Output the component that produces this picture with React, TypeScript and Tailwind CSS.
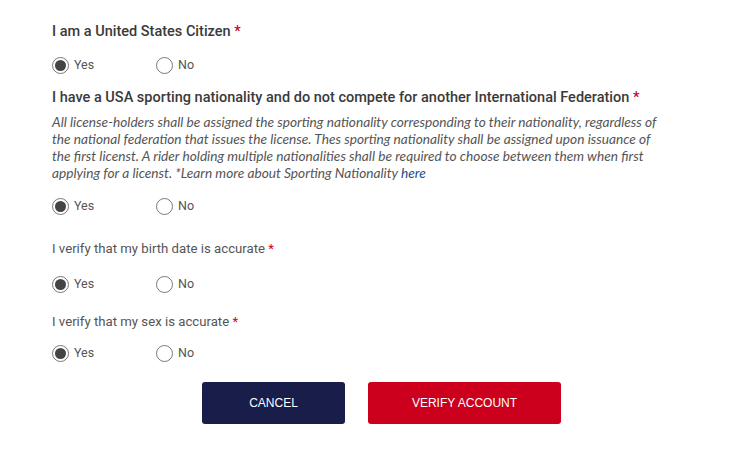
import { useState } from 'react'

function Radio({ checked, label, onClick }: { checked: boolean; label: string; onClick: () => void }) {
  return (
    <button type="button" onClick={onClick} className="flex items-center gap-[5px] text-[12.5px] text-[#555]">
      <span className="flex h-[17px] w-[17px] items-center justify-center rounded-full border border-[#777] bg-white">
        {checked && <span className="h-[11px] w-[11px] rounded-full bg-[#444]" />}
      </span>
      <span>{label}</span>
    </button>
  )
}

function YesNo({ value, onChange }: { value: string; onChange: (v: string) => void }) {
  return (
    <div className="flex h-[20px] items-center">
      <div className="w-[104px]">
        <Radio checked={value === 'yes'} label="Yes" onClick={() => onChange('yes')} />
      </div>
      <Radio checked={value === 'no'} label="No" onClick={() => onChange('no')} />
    </div>
  )
}

function Req() {
  return <span className="text-[#d0021b]"> *</span>
}

export default function App() {
  const [answers, setAnswers] = useState<Record<string, string>>({
    citizen: 'yes',
    nationality: 'yes',
    birth: 'yes',
    sex: 'yes',
  })
  const set = (k: string) => (v: string) => setAnswers({ ...answers, [k]: v })

  return (
    <div className="min-h-screen bg-white pl-[52px] pt-[22px] font-['Roboto',sans-serif]">
      <h3 className="text-[14.5px] font-medium leading-[20px] text-[#3a3a3a]">
        I am a United States Citizen
        <Req />
      </h3>
      <div className="mt-[13px]">
        <YesNo value={answers.citizen} onChange={set('citizen')} />
      </div>

      <h3 className="mt-[13px] text-[14.5px] font-medium leading-[20px] text-[#3a3a3a]">
        I have a USA sporting nationality and do not compete for another International Federation
        <Req />
      </h3>
      <p className="mt-[5px] w-[615px] text-[13.7px] italic leading-[17px] text-[#555] font-['Lato',sans-serif]">
        All license-holders shall be assigned the sporting nationality corresponding to their nationality, regardless of
        the national federation that issues the license. Thes sporting nationality shall be assigned upon issuance of
        the first licenst. A rider holding multiple nationalities shall be required to choose between them when first
        applying for a licenst. *Learn more about Sporting Nationality{' '}
        <a href="#" className="text-[#1f4e8c]">here</a>
      </p>
      <div className="mt-[15px]">
        <YesNo value={answers.nationality} onChange={set('nationality')} />
      </div>

      <label className="mt-[23px] block text-[13.2px] leading-[20px] text-[#555]">
        I verify that my birth date is accurate
        <Req />
      </label>
      <div className="mt-[15px]">
        <YesNo value={answers.birth} onChange={set('birth')} />
      </div>

      <label className="mt-[18px] block text-[13.2px] leading-[20px] text-[#555]">
        I verify that my sex is accurate
        <Req />
      </label>
      <div className="mt-[11px]">
        <YesNo value={answers.sex} onChange={set('sex')} />
      </div>

      <div className="mt-[19px] flex gap-[23px] pl-[150px] font-['Liberation_Sans',sans-serif]">
        <button type="button" className="h-[42px] w-[143px] rounded-[3px] bg-[#181d4a] text-[12px] text-white">
          CANCEL
        </button>
        <button type="button" className="h-[42px] w-[193px] rounded-[3px] bg-[#cc001c] text-[12px] text-white">
          VERIFY ACCOUNT
        </button>
      </div>
    </div>
  )
}
